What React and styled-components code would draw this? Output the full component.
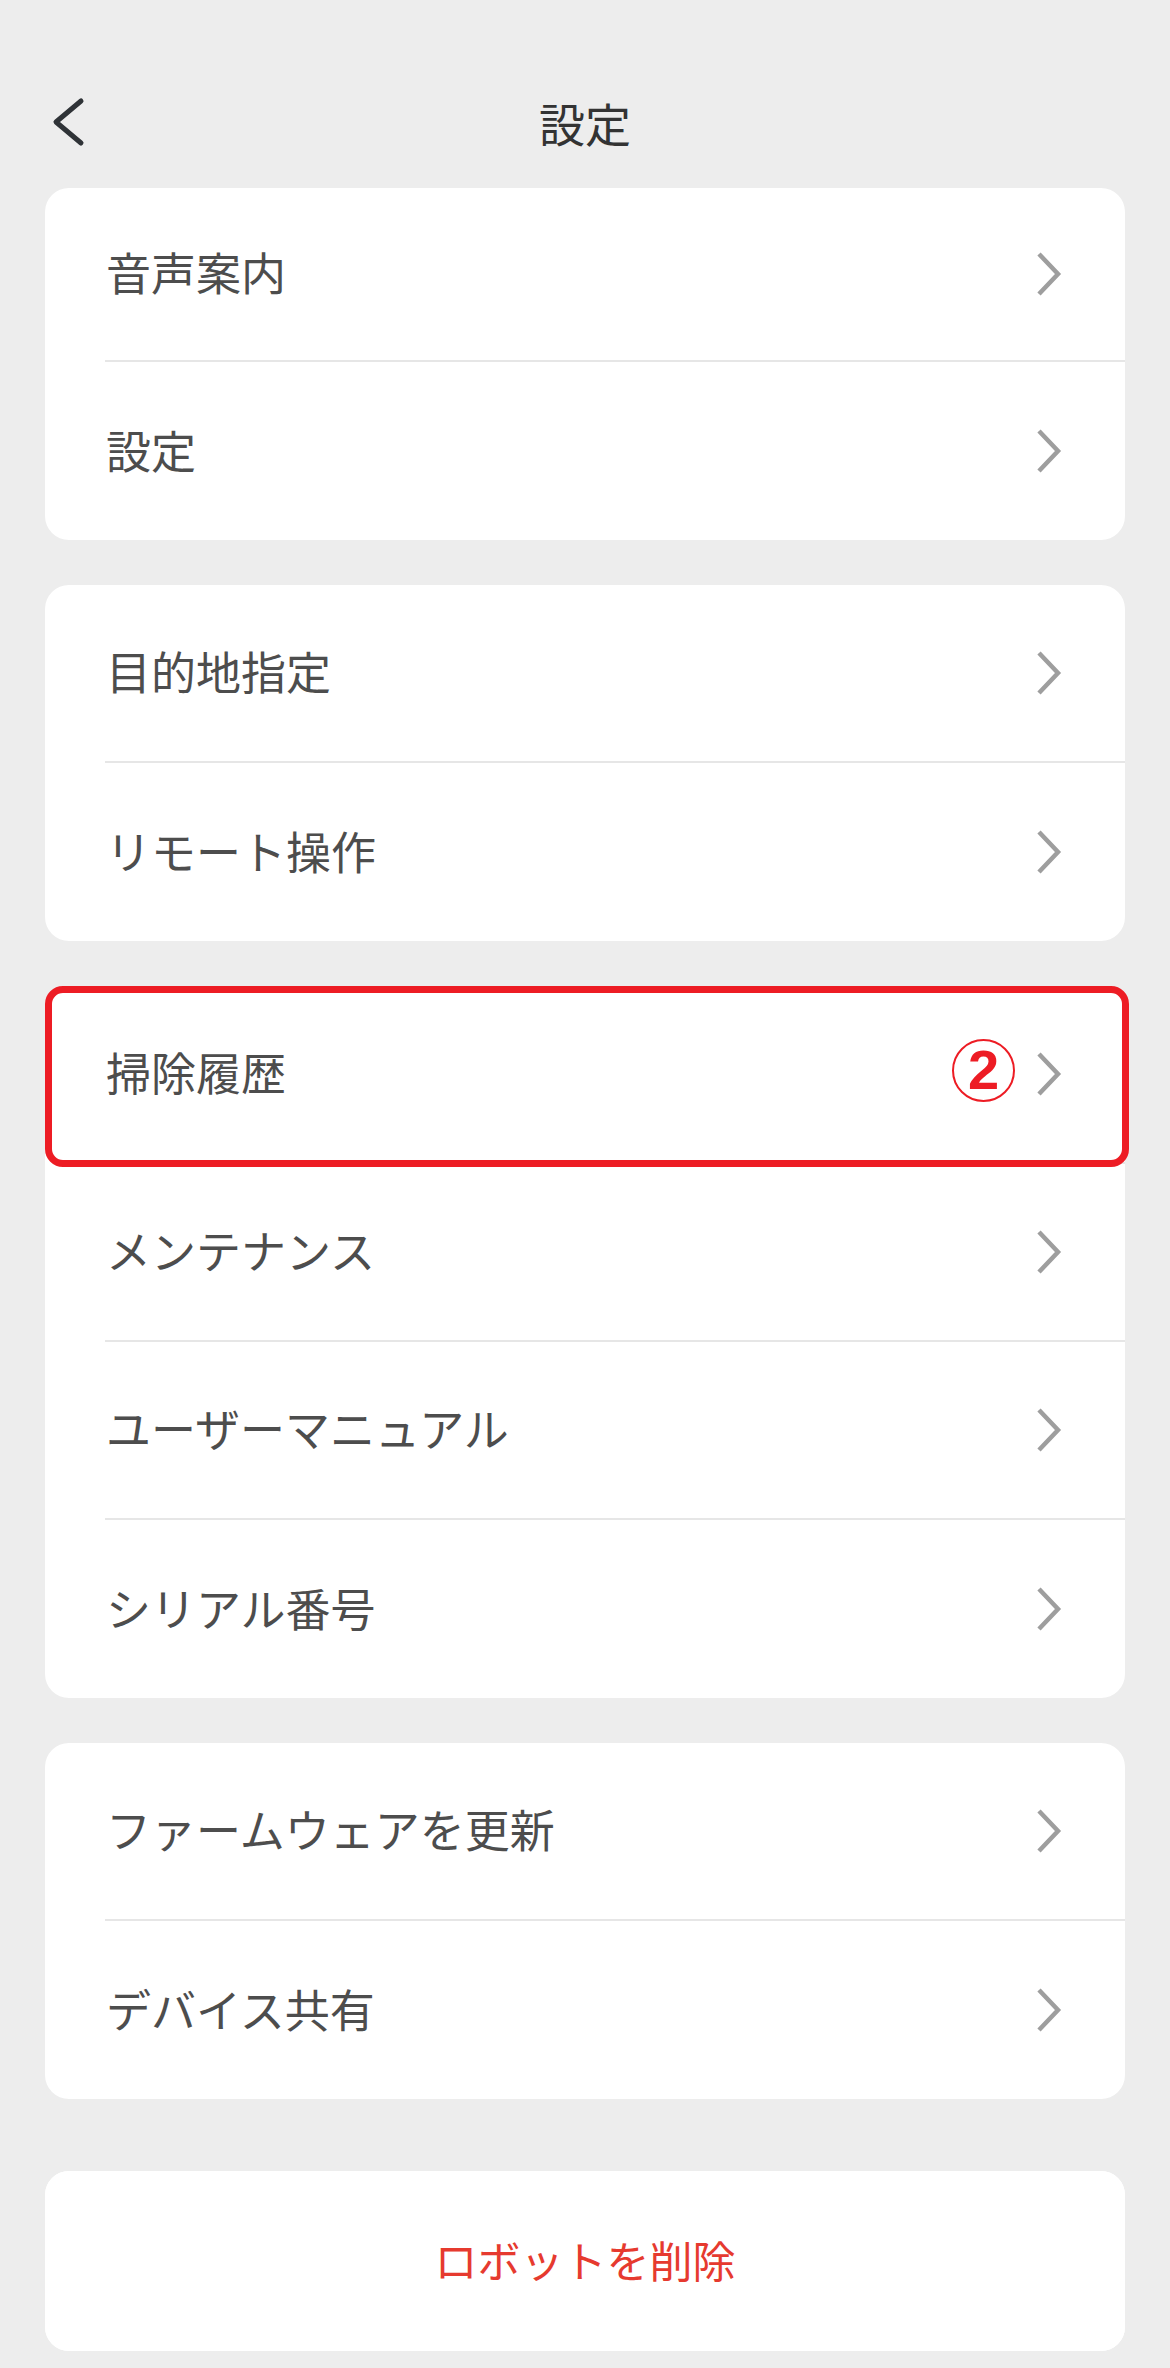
import React from "react";
import styled, { createGlobalStyle } from "styled-components";

const GlobalStyle = createGlobalStyle`
  html, body {
    margin: 0;
    padding: 0;
    background-color: #ededed;
  }
  body {
    font-family: "Noto Sans CJK JP", "Noto Sans", sans-serif;
    -webkit-font-smoothing: antialiased;
  }
`;

const Page = styled.div`
  width: 1170px;
  min-height: 2368px;
  background-color: #ededed;
`;

const Header = styled.header`
  height: 188px;
  box-sizing: border-box;
  padding: 55px 50px 0;
  display: grid;
  grid-template-columns: 1fr auto 1fr;
  align-items: center;
`;

const BackButton = styled.button`
  justify-self: start;
  border: none;
  background: none;
  padding: 0;
  width: 36px;
  height: 52px;
  display: flex;
  cursor: pointer;
`;

const Title = styled.h1`
  margin: 0;
  font-size: 46px;
  font-weight: 400;
  color: #333333;
  line-height: 1;
`;

const List = styled.div`
  padding: 0 45px;
  display: flex;
  flex-direction: column;
  gap: 45px;
`;

const Card = styled.div`
  background-color: #ffffff;
  border-radius: 24px;
  margin-top: ${(p) => (p.$spaced ? "27px" : "0")};
`;

const Row = styled.div`
  position: relative;
  height: ${(p) => (p.$short ? "174px" : "178px")};
  padding-left: 60px;
  box-sizing: border-box;
  cursor: pointer;
`;

const RowInner = styled.div`
  height: 100%;
  box-sizing: border-box;
  display: flex;
  align-items: center;
  padding: 0 63px 0 1px;
  border-bottom: ${(p) => (p.$last ? "none" : "2px solid #e6e6e6")};
`;

const Label = styled.span`
  flex: 1;
  font-size: 45px;
  color: #4d4d4d;
  line-height: 1;
  margin-top: ${(p) => (p.$last ? "-3px" : "-5px")};
`;

const Badge = styled.span`
  width: 63px;
  height: 63px;
  box-sizing: border-box;
  border: 2.5px solid #ed1c24;
  border-radius: 50%;
  display: flex;
  align-items: center;
  justify-content: center;
  margin-right: 21px;
  margin-top: -8px;
  font-family: "Liberation Sans", Arial, sans-serif;
  font-weight: 700;
  font-size: 56px;
  line-height: 1;
  color: #ed1c24;
`;

const Highlight = styled.div`
  position: absolute;
  top: 0;
  left: 0;
  right: -4px;
  bottom: -3px;
  border: 7px solid #ed1c24;
  border-radius: 18px;
  pointer-events: none;
`;

const DangerButton = styled.button`
  width: 100%;
  height: 180px;
  border: none;
  border-radius: 24px;
  background-color: #ffffff;
  font-family: "Noto Sans CJK JP", "Noto Sans", sans-serif;
  font-size: 43px;
  color: #e63a2f;
  cursor: pointer;
  padding: 0 0 4px;
`;

const Chevron = () => (
  <svg width="26" height="46" viewBox="0 0 26 46" fill="none">
    <path d="M3 3 L22 23 L3 43" stroke="#9e9e9e" strokeWidth="4.5" />
  </svg>
);

const BackIcon = () => (
  <svg width="36" height="52" viewBox="0 0 36 52" fill="none">
    <path
      d="M31 5 L6 26 L31 47"
      stroke="#2f3337"
      strokeWidth="5"
      strokeLinecap="round"
      strokeLinejoin="round"
    />
  </svg>
);

const groups = [
  [{ label: "音声案内" }, { label: "設定" }],
  [{ label: "目的地指定" }, { label: "リモート操作" }],
  [
    { label: "掃除履歴", marked: true },
    { label: "メンテナンス" },
    { label: "ユーザーマニュアル" },
    { label: "シリアル番号" },
  ],
  [{ label: "ファームウェアを更新" }, { label: "デバイス共有" }],
];

const App = () => {
  return (
    <Page>
      <GlobalStyle />
      <Header>
        <BackButton aria-label="戻る">
          <BackIcon />
        </BackButton>
        <Title>設定</Title>
        <span />
      </Header>
      <List>
        {groups.map((items, gi) => (
          <Card key={gi}>
            {items.map((item, i) => {
              const last = i === items.length - 1;
              return (
                <Row key={item.label} $short={gi === 0 && i === 0}>
                  <RowInner $last={last}>
                    <Label $last={last}>{item.label}</Label>
                    {item.marked && <Badge>2</Badge>}
                    <Chevron />
                  </RowInner>
                  {item.marked && <Highlight />}
                </Row>
              );
            })}
          </Card>
        ))}
        <Card $spaced>
          <DangerButton>ロボットを削除</DangerButton>
        </Card>
      </List>
    </Page>
  );
};

export default App;
